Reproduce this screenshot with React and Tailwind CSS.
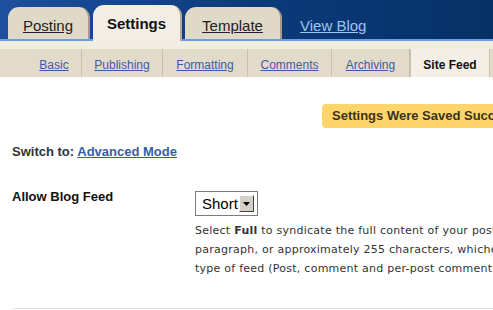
import React from "react";

const subTabs = [
  { label: "Basic", w: "w-[55px]" },
  { label: "Publishing", w: "w-[81px]" },
  { label: "Formatting", w: "w-[85px]" },
  { label: "Comments", w: "w-[84px]" },
  { label: "Archiving", w: "w-[78px]" },
  { label: "Site Feed", w: "w-[80px]", active: true },
];

const SelectBox = () => (
  <div className="flex items-center w-[63px] h-[25px] bg-white border border-[#7b7b7b] pl-[6px] pr-[3px]">
    <span className="flex-1 text-[15px] leading-none text-black">Short</span>
    <span className="flex items-center justify-center w-[15px] h-[17px] bg-[#d4d0c8] border border-t-white border-l-white border-r-[#404040] border-b-[#404040]">
      <svg width="7" height="4" viewBox="0 0 7 4">
        <path d="M0 0h7L3.5 4z" fill="#000" />
      </svg>
    </span>
  </div>
);

export default function App() {
  return (
    <div className="w-[493px] h-[310px] overflow-hidden bg-white font-['Liberation_Sans',Arial,sans-serif]">
      {/* top tabs */}
      <div className="h-[41px] flex items-end pl-[8px] gap-[3px] border-b-2 border-[#6e9de0] bg-gradient-to-r from-[#1d4f9e] via-[#0c3b7c] to-[#063166]">
        <a className="h-[32px] w-[82px] flex items-center justify-center pt-[6px] rounded-t-[11px] bg-[#e1d9c7] border-r-2 border-[#a49b8a] text-[15px] text-[#222] underline">
          Posting
        </a>
        <a className="h-[36px] w-[89px] -mb-[2px] flex items-center justify-center pt-[3px] rounded-t-[11px] bg-[#f3eee5] border-r-2 border-[#b4ab9a] text-[15px] font-bold text-[#111]">
          Settings
        </a>
        <a className="h-[32px] w-[97px] flex items-center justify-center pt-[6px] rounded-t-[11px] bg-[#e1d9c7] border-r-2 border-[#a49b8a] text-[15px] text-[#222] underline">
          Template
        </a>
        <a className="ml-[15px] h-[32px] flex items-center pt-[6px] text-[15px] text-[#9ec4f2] underline">
          View Blog
        </a>
      </div>

      {/* sub nav */}
      <div className="h-[8px] bg-[#f2ede4]" />
      <div className="h-[28px] flex pl-[27px] bg-[#e3dbca]">
        {subTabs.map((t) => (
          <div
            key={t.label}
            className={`${t.w} flex items-center justify-center pt-[4px] text-[12px] border-r border-[#c9bfad] ${
              t.active ? "bg-[#f3efe7] font-bold text-[#111] border-l" : "text-[#3a5ba6] underline"
            }`}
          >
            {t.label}
          </div>
        ))}
      </div>

      {/* saved notice */}
      <div className="mt-[27px] ml-[322px] h-[24px] w-[240px] flex items-center pl-[10px] rounded-l-[4px] bg-[#fdd56b] text-[13px] font-bold text-[#3b321f] whitespace-nowrap">
        Settings Were Saved Successfully
      </div>

      <div className="mt-[16px] ml-[12px] text-[13px] leading-[16px] font-bold text-[#333]">
        Switch to: <a className="text-[#3a5ba6] underline">Advanced Mode</a>
      </div>

      {/* feed row */}
      <div className="mt-[28px] ml-[12px] flex">
        <div className="w-[183px] shrink-0 pt-[1px] text-[13px] leading-[16px] font-bold text-[#111]">Allow Blog Feed</div>
        <div className="flex flex-col min-w-0">
          <div className="mt-[3px]">
            <SelectBox />
          </div>
          <div className="mt-[5px] font-['DejaVu_Sans',Verdana,sans-serif] text-[11px] tracking-[0.25px] leading-[19px] text-[#333] whitespace-nowrap">
            <div>
              Select <b>Full</b> to syndicate the full content of your post. Select <b>Short</b> to syndicate only the first
            </div>
            <div>paragraph, or approximately 255 characters, whichever is shorter. This setting will apply to each</div>
            <div>type of feed (Post, comment and per-post comment feeds).</div>
          </div>
        </div>
      </div>

      <div className="mt-[30px] ml-[12px] h-px bg-[#e2e2e2]" />
    </div>
  );
}
